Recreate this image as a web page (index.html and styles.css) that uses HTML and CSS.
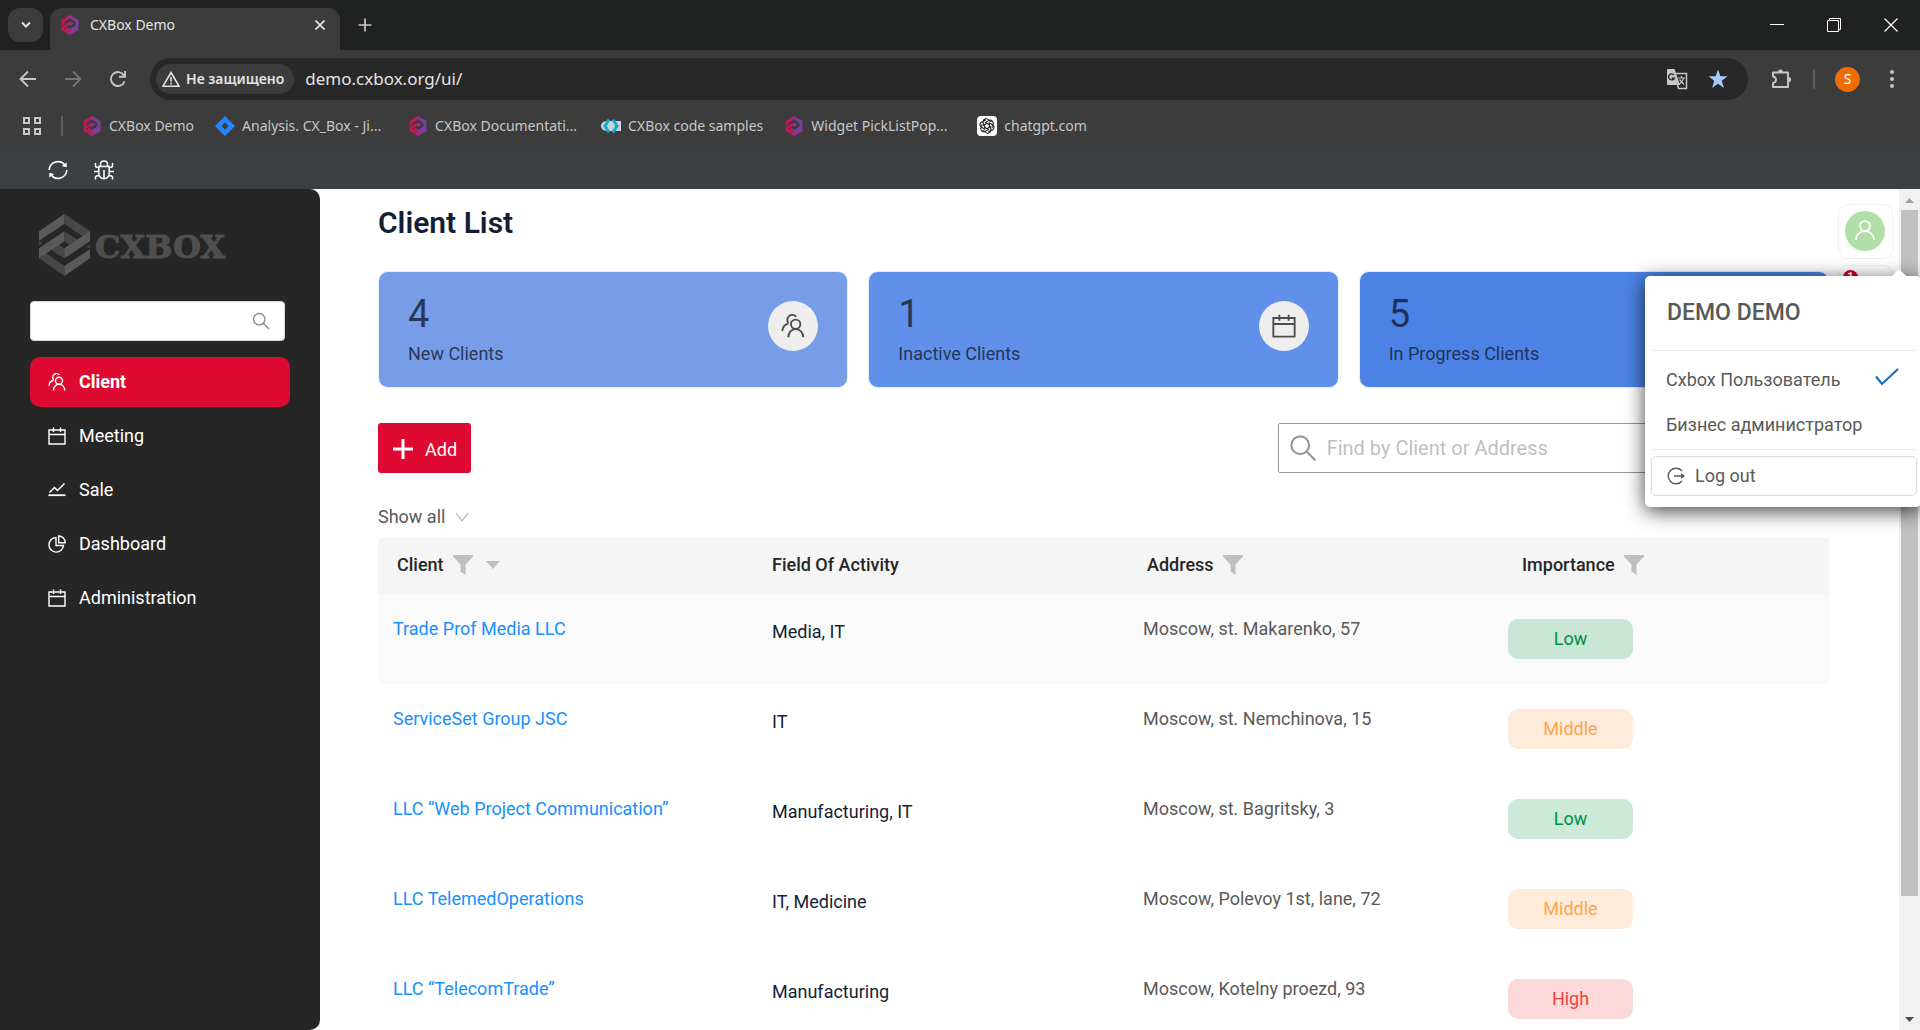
FILE: index.html
```html
<!DOCTYPE html>
<html lang="en">
<head>
<meta charset="utf-8">
<meta name="viewport" content="width=device-width, initial-scale=1">
<title>CXBox Demo</title>
<link rel="stylesheet" href="styles.css">
</head>
<body>
<svg class="defs" aria-hidden="true">
  <defs>
    <linearGradient id="brand" x1="0" x2="1" y1="0" y2="0">
      <stop offset="0.3" stop-color="#c2185b"/><stop offset="0.7" stop-color="#7b3fa0"/>
    </linearGradient>
    <symbol id="i-brand" viewBox="0 0 18 20">
      <path d="M9 0 17.500 5V12.500L9 17 5 14.500V11.500L9 14 14.500 10.500V7L9 3.500 3.500 7V9L.5 10.500V5Z" fill="url(#brand)"/>
      <path d="M.5 11.500 9 6.500 12.500 8.500 9 11 7.500 10 3.500 12.500V13.500L9 16.700 17.500 12V15L9 20 .5 15Z" fill="url(#brand)"/>
    </symbol>
    <symbol id="i-clients" viewBox="0 0 18 18">
      <g fill="none" stroke="currentColor" stroke-width="1.400">
        <circle cx="11" cy="7.700" r="3.500"/><path d="M5.500 17.500c0-3.800 2.300-6.200 5.500-6.200s5.700 2.400 5.700 6.200"/>
        <path d="M11.300 1.900A3.700 3.700 0 1 0 5.700 6.900M1 12.800C1.200 9.500 3 7.800 5.600 7.200"/>
      </g>
    </symbol>
    <symbol id="i-calendar" viewBox="0 0 18 18">
      <path d="M1 3H17V17H1ZM1 7.500H17M5.500.5V5M12.500.5V5" fill="none" stroke="currentColor" stroke-width="1.400"/>
    </symbol>
    <symbol id="i-chart" viewBox="0 0 18 18">
      <path d="M1.500 11.500 6.500 6.500 9.500 9.500 16.500 2.500" fill="none" stroke="currentColor" stroke-width="1.500"/><path d="M.5 14.200H17.500" stroke="currentColor" stroke-width="1.800"/>
    </symbol>
    <symbol id="i-pie" viewBox="0 0 18 18">
      <path d="M8 2.500A7.300 7.300 0 1 0 15.500 10.500H8ZM10.700 1V7.800H17.200A6.600 6.600 0 0 0 10.700 1Z" fill="none" stroke="currentColor" stroke-width="1.400"/>
    </symbol>
    <symbol id="i-search" viewBox="0 0 18 18">
      <g fill="none" stroke="currentColor" stroke-width="1.400"><circle cx="7.200" cy="7.200" r="5.700"/><path d="M11.300 11.300 17 17"/></g>
    </symbol>
    <symbol id="i-user" viewBox="0 0 20 20">
      <g fill="none" stroke="currentColor" stroke-width="1.700"><circle cx="10" cy="6" r="5"/><path d="M1 20C1 14.500 5 11.200 10 11.200S19 14.500 19 20"/></g>
    </symbol>
    <symbol id="i-filter" viewBox="0 0 20 20">
      <path d="M0 0H20V1.500L12.500 9.500V20L7.500 16.500V9.500L0 1.500Z" fill="currentColor"/>
    </symbol>
  </defs>
</svg>

<header class="browser">
  <div class="tabs">
    <button class="tab-menu" aria-label="Search tabs"><svg width="10" height="8" viewBox="0 0 10 8"><path d="M1 1.500 5 5.500 9 1.500" fill="none" stroke="#e3e3e3" stroke-width="2"/></svg></button>
    <div class="tab">
      <svg width="18" height="20"><use href="#i-brand"/></svg>
      <span class="tab-title">CXBox Demo</span>
      <button class="plain" aria-label="Close tab"><svg width="10" height="10" viewBox="0 0 10 10"><path d="M.5.5 9.500 9.500M9.500.5.5 9.500" stroke="#e3e3e3" stroke-width="1.700"/></svg></button>
    </div>
    <button class="plain new-tab" aria-label="New tab"><svg width="14" height="14" viewBox="0 0 14 14"><path d="M7 .5V13.500M.5 7H13.500" stroke="#c7c7c7" stroke-width="1.700"/></svg></button>
    <div class="window-buttons">
      <button class="plain" aria-label="Minimize"><svg width="14" height="14" viewBox="0 0 14 14"><path d="M0 6.500H14" stroke="#fff"/></svg></button>
      <button class="plain" aria-label="Restore"><svg width="14" height="14" viewBox="0 0 14 14"><path d="M.5 2.500H11.500V13.500H.5ZM2.500 2.500V.5H13.500V11.500H11.500" fill="none" stroke="#fff"/></svg></button>
      <button class="plain" aria-label="Close"><svg width="14" height="14" viewBox="0 0 14 14"><path d="M.5.5 13.500 13.500M13.500.5.5 13.500" stroke="#fff" stroke-width="1.200"/></svg></button>
    </div>
  </div>

  <div class="toolbar">
    <div class="nav-buttons">
      <button class="plain" aria-label="Back"><svg width="18" height="18" viewBox="0 0 18 18"><path d="M17 9H2M9 1.500 1.500 9 9 16.500" fill="none" stroke="#c7c7c7" stroke-width="1.900"/></svg></button>
      <button class="plain" aria-label="Forward"><svg width="18" height="18" viewBox="0 0 18 18"><path d="M1 9H16M9 1.500 16.500 9 9 16.500" fill="none" stroke="#757575" stroke-width="1.900"/></svg></button>
      <button class="plain" aria-label="Reload"><svg width="18" height="18" viewBox="0 0 18 18"><path d="M15.500 11.500A7 7 0 1 1 15 5.500M16 1V6.700H10" fill="none" stroke="#c7c7c7" stroke-width="1.900"/></svg></button>
    </div>
    <div class="omnibox">
      <button class="chip"><svg width="18" height="16" viewBox="0 0 18 16"><path d="M9 1.500 17 15.200H1ZM9 6V10.500M9 11.800V13.500" fill="none" stroke="#e3e3e3" stroke-width="1.600"/></svg>Не защищено</button>
      <input class="url" aria-label="Address" value="demo.cxbox.org/ui/">
      <button class="plain" aria-label="Translate"><svg width="22" height="22" viewBox="0 0 22 22">
        <path d="M2 1H8.500L14 17H2Q1 17 1 16V2Q1 1 2 1Z" fill="#c7c7c7"/>
        <path d="M10 5.500H20.500V20.500H12.500L11.500 17" fill="none" stroke="#c7c7c7" stroke-width="1.500"/>
        <path d="M8 7A3 3 0 1 0 8.300 10.300H5.800" fill="none" stroke="#282828" stroke-width="1.400"/>
        <path d="M12 10H19M15.500 8V10M17.500 10C17 13 15 15 13 16.500M13.500 11.500 18 16.500" fill="none" stroke="#c7c7c7" stroke-width="1.200"/></svg></button>
      <button class="plain" aria-label="Bookmarked"><svg width="20" height="20" viewBox="0 0 20 20"><path d="M10 .5 12.400 7.300H19.500L13.800 11.700 15.900 19 10 14.800 4.100 19 6.200 11.700.5 7.300H7.600Z" fill="#a8c7fa"/></svg></button>
    </div>
    <button class="plain ext" aria-label="Extensions"><svg width="22" height="22" viewBox="0 0 22 22"><path d="M2 4.500H17V19H2V15C6 14 6 9.500 2 8.500Z" fill="none" stroke="#c7c7c7" stroke-width="1.900" stroke-linejoin="round"/><path d="M7 4a2.500 2.500 0 0 1 5 0ZM17.500 9a2.600 2.600 0 0 1 0 5.200Z" fill="#c7c7c7"/></svg></button>
    <span class="divider"></span>
    <button class="profile">S</button>
    <button class="plain menu" aria-label="Menu"><svg width="4" height="18" viewBox="0 0 4 18"><g fill="#c7c7c7"><circle cx="2" cy="2" r="2"/><circle cx="2" cy="9" r="2"/><circle cx="2" cy="16" r="2"/></g></svg></button>
  </div>

  <nav class="bookmarks" aria-label="Bookmarks">
    <button class="plain" aria-label="Apps"><svg width="20" height="20" viewBox="0 0 20 20"><path d="M2 2H7V7H2ZM13 2H18V7H13ZM2 13H7V18H2ZM13 13H18V18H13Z" fill="none" stroke="#c7c7c7" stroke-width="2"/></svg></button>
    <span class="divider"></span>
    <a href="#"><svg width="20" height="20"><use href="#i-brand"/></svg>CXBox Demo</a>
    <a href="#"><svg width="20" height="20" viewBox="0 0 20 20"><path d="M10 0 20 10 10 20 0 10ZM10 6.500 6.500 10 10 13.500 13.500 10Z" fill="#2684ff" fill-rule="evenodd"/></svg><span class="trim">Analysis. CX_Box - Ji...</span></a>
    <a href="#"><svg width="20" height="20"><use href="#i-brand"/></svg><span class="trim">CXBox Documentati...</span></a>
    <a href="#"><svg width="20" height="20" viewBox="0 0 20 20"><path d="M5 5H20V15H5Q0 14 0 10T5 5Z" fill="#c9d3d6"/><path d="M8 3.500 4 10 8 16.500M12 3.500 16 10 12 16.500" fill="none" stroke="#14a9cf" stroke-width="3"/></svg>CXBox code samples</a>
    <a href="#"><svg width="20" height="20"><use href="#i-brand"/></svg><span class="trim">Widget PickListPop...</span></a>
    <a href="#"><svg width="20" height="20" viewBox="0 0 20 20"><rect width="20" height="20" rx="4" fill="#fff"/><g fill="none" stroke="#222" stroke-width="1.100"><g id="petal"><path d="M10 7.300 6.200 9.500V5.800A3 3 0 0 1 11.800 4.300L14.500 5.900"/></g><use href="#petal" transform="rotate(60 10 10)"/><use href="#petal" transform="rotate(120 10 10)"/><use href="#petal" transform="rotate(180 10 10)"/><use href="#petal" transform="rotate(240 10 10)"/><use href="#petal" transform="rotate(300 10 10)"/></g></svg>chatgpt.com</a>
  </nav>
</header>

<div class="dev-bar">
  <button class="plain" aria-label="Refresh"><svg width="20" height="20" viewBox="0 0 20 20"><g fill="none" stroke="#fff" stroke-width="1.600"><path d="M1.200 10A8.800 8.800 0 0 1 17 5.200M18.800 10A8.800 8.800 0 0 1 3 14.800"/></g><path d="M18.700 2.500V7.200L13.800 6ZM1.300 17.500V12.800L6.200 14Z" fill="#fff"/></svg></button>
  <button class="plain" aria-label="Debug"><svg width="20" height="20" viewBox="0 0 20 20"><path d="M4.800 6.500H15.200V13.500A5.200 5.200 0 0 1 4.800 13.500ZM6.500 6.500V4A3.500 3 0 0 1 13.500 4V6.500M10 10V18.500M1.500 3V6Q1.500 7.500 4.800 7.500M18.500 3V6Q18.500 7.500 15.200 7.500M0 11.500H4.800M15.200 11.500H20M1.500 19.500V17Q2 15.500 5 15.500M18.500 19.500V17Q18 15.500 15 15.500" fill="none" stroke="#fff" stroke-width="1.500"/></svg></button>
</div>

<div class="app">
  <aside class="sidebar">
    <a class="logo" href="#">
      <svg width="51" height="62" viewBox="0 0 153 186" aria-hidden="true">
        <path d="M76 0 153 52V82L76 30ZM76 52 120 80 98 96 76 82ZM153 92V103L142 98ZM76 186 0 133V103L76 156ZM76 133 32 105 54 89 76 103ZM0 93V82L12 88Z" fill="#474747"/>
        <path d="M76 0V30L0 80V52ZM0 103 76 52V82L0 133ZM76 186V156L153 106V133ZM153 52V82L76 133V103Z" fill="#5a5a5a"/>
      </svg>
      <span class="logo-name">CXBOX</span>
    </a>
    <div class="side-search">
      <input type="search" aria-label="Search screens">
      <svg width="18" height="18"><use href="#i-search"/></svg>
    </div>
    <nav class="side-menu" aria-label="Screens">
      <a class="active" href="#"><svg width="18" height="18"><use href="#i-clients"/></svg>Client</a>
      <a href="#"><svg width="18" height="18"><use href="#i-calendar"/></svg>Meeting</a>
      <a href="#"><svg width="18" height="18"><use href="#i-chart"/></svg>Sale</a>
      <a href="#"><svg width="18" height="18"><use href="#i-pie"/></svg>Dashboard</a>
      <a href="#"><svg width="18" height="18"><use href="#i-calendar"/></svg>Administration</a>
    </nav>
  </aside>

  <main class="content">
    <h1>Client List</h1>

    <section class="cards" aria-label="Statistics">
      <article class="card new">
        <div><p class="count">4</p><p class="caption">New Clients</p></div>
        <span class="card-icon"><svg width="24" height="24"><use href="#i-clients"/></svg></span>
      </article>
      <article class="card inactive">
        <div><p class="count">1</p><p class="caption">Inactive Clients</p></div>
        <span class="card-icon"><svg width="24" height="24"><use href="#i-calendar"/></svg></span>
      </article>
      <article class="card progress">
        <div><p class="count">5</p><p class="caption">In Progress Clients</p></div>
        <span class="card-icon"><svg width="24" height="24"><use href="#i-chart"/></svg></span>
      </article>
    </section>

    <div class="actions">
      <button class="add"><svg width="20" height="20" viewBox="0 0 20 20"><path d="M10 0V20M0 10H20" stroke="#fff" stroke-width="3"/></svg><span class="add-text">Add</span></button>
      <label class="find">
        <svg width="28" height="28"><use href="#i-search"/></svg>
        <input type="text" placeholder="Find by Client or Address" aria-label="Find by Client or Address">
      </label>
    </div>

    <label class="filter-group">
      <select aria-label="Filter group"><option>Show all</option></select>
      <svg width="14" height="10" viewBox="0 0 14 10"><path d="M1 1 7 9 13 1" fill="none" stroke="#bfbfbf" stroke-width="1.300"/></svg>
    </label>

    <table>
      <thead>
        <tr>
          <th><span class="head">Client <svg width="20" height="20"><use href="#i-filter"/></svg><svg class="sort" width="14" height="8" viewBox="0 0 14 8"><path d="M0 0H14L7 8Z" fill="currentColor"/></svg></span></th>
          <th>Field Of Activity</th>
          <th><span class="head">Address <svg width="20" height="20"><use href="#i-filter"/></svg></span></th>
          <th><span class="head">Importance <svg width="20" height="20"><use href="#i-filter"/></svg></span></th>
        </tr>
      </thead>
      <tbody>
        <tr class="hover"><td><a href="#">Trade Prof Media LLC</a></td><td class="field">Media, IT</td><td>Moscow, st. Makarenko, 57</td><td class="level"><span class="badge low">Low</span></td></tr>
        <tr><td><a href="#">ServiceSet Group JSC</a></td><td class="field">IT</td><td>Moscow, st. Nemchinova, 15</td><td class="level"><span class="badge middle">Middle</span></td></tr>
        <tr><td><a href="#">LLC “Web Project Communication”</a></td><td class="field">Manufacturing, IT</td><td>Moscow, st. Bagritsky, 3</td><td class="level"><span class="badge low">Low</span></td></tr>
        <tr><td><a href="#">LLC TelemedOperations</a></td><td class="field">IT, Medicine</td><td>Moscow, Polevoy 1st, lane, 72</td><td class="level"><span class="badge middle">Middle</span></td></tr>
        <tr><td><a href="#">LLC “TelecomTrade”</a></td><td class="field">Manufacturing</td><td>Moscow, Kotelny proezd, 93</td><td class="level"><span class="badge high">High</span></td></tr>
      </tbody>
    </table>
  </main>

  <div class="side-tools">
    <button class="tool" aria-label="User menu"><span class="avatar"><svg width="20" height="20"><use href="#i-user"/></svg></span></button>
    <button class="tool" aria-label="Notifications"><span class="alert">1</span></button>
  </div>

  <div class="scrollbar" aria-hidden="true">
    <svg width="21" height="21" viewBox="0 0 21 21"><path d="M6 14H15L10.500 9Z" fill="#a3a3a3"/></svg>
    <span class="thumb"></span>
    <span class="track"></span>
    <svg width="21" height="21" viewBox="0 0 21 21"><path d="M6 8H15L10.500 13Z" fill="#505050"/></svg>
  </div>

  <section class="user-menu" aria-label="User">
    <h2>DEMO DEMO</h2>
    <ul>
      <li><button class="role">Cxbox Пользователь<svg class="check" width="24" height="18" viewBox="0 0 24 18"><path d="M1 8.500 7 16 23 1" fill="none" stroke="#1c6fc0" stroke-width="2.200"/></svg></button></li>
      <li><button class="role">Бизнес администратор</button></li>
    </ul>
    <button class="logout"><svg width="18" height="18" viewBox="0 0 18 18"><path d="M15 4A7.800 7.800 0 1 0 15 14M7 9H16" fill="none" stroke="#595959" stroke-width="1.400"/><path d="M14 6 18 9 14 12Z" fill="#595959"/></svg>Log out</button>
  </section>
</div>
</body>
</html>
```

FILE: styles.css
```css
* { box-sizing: border-box; }

body {
  margin: 0;
  height: 100vh;
  display: flex;
  flex-direction: column;
  overflow: hidden;
  background: #fff;
  font-family: Roboto, "Liberation Sans", sans-serif;
  font-size: 18px;
  line-height: 28px;
  color: #141f35;
}

h1, h2, p, ul { margin: 0; padding: 0; }
ul { list-style: none; }
a { color: inherit; text-decoration: none; }
button, input, select { font: inherit; color: inherit; }
svg { display: block; flex: none; }
.defs { position: absolute; width: 0; height: 0; }

.plain {
  display: flex;
  align-items: center;
  padding: 0;
  border: 0;
  background: none;
}

/* Browser frame */
.browser {
  flex: none;
  background: #3c3c3c;
  color: #e3e3e3;
  font-family: "Noto Sans", "Open Sans", sans-serif;
  font-size: 14px;
  line-height: 20px;
}

.tabs {
  display: flex;
  align-items: center;
  height: 50px;
  padding-left: 8px;
  background: #202221;
}

.tab-menu {
  display: flex;
  align-items: center;
  justify-content: center;
  width: 35px;
  height: 34px;
  border: 0;
  border-radius: 12px;
  background: #3c3c3c;
}

.tab {
  display: flex;
  align-items: center;
  align-self: flex-end;
  gap: 11px;
  width: 290px;
  height: 42px;
  margin-left: 7px;
  padding: 0 15px 8px 11px;
  border-radius: 12px 12px 0 0;
  background: #3c3c3c;
}

.tab-title { flex: 1; }
.new-tab { margin-left: 18px; }

.window-buttons {
  display: flex;
  gap: 43px;
  margin-left: auto;
  padding-right: 22px;
}

.toolbar {
  display: flex;
  align-items: center;
  height: 50px;
  padding: 8px 26px 0 19px;
}

.nav-buttons {
  display: flex;
  gap: 27px;
  width: 131px;
}

.omnibox {
  flex: 1;
  display: flex;
  align-items: center;
  gap: 20px;
  height: 42px;
  padding: 0 20px 0 6px;
  border-radius: 21px;
  background: #282828;
}

.chip {
  display: flex;
  align-items: center;
  gap: 6px;
  height: 30px;
  padding: 0 10px 0 6px;
  border: 0;
  border-radius: 15px;
  background: #3c3c3c;
  font-weight: 600;
  white-space: nowrap;
}

.url {
  flex: 1;
  min-width: 0;
  margin-left: -9px;
  padding: 0;
  border: 0;
  outline: 0;
  background: none;
  font-size: 17px;
}

.ext { margin-left: 23px; }

.divider {
  width: 2px;
  height: 20px;
  border-radius: 1px;
  background: #5f6062;
}

.toolbar .divider { margin: 0 20px; }

.profile {
  width: 25px;
  height: 25px;
  padding: 0;
  border: 0;
  border-radius: 50%;
  background: #ef6c00;
  color: #fff;
}

.menu { margin-left: 30px; }

.bookmarks {
  display: flex;
  align-items: center;
  gap: 21px;
  height: 51px;
  padding-left: 22px;
  color: #c7c7c7;
}

.bookmarks .divider { margin: 0 -2px; }

.bookmarks a {
  display: flex;
  align-items: center;
  gap: 7px;
  white-space: nowrap;
}

.trim { width: 145px; }

.dev-bar {
  flex: none;
  display: flex;
  align-items: center;
  gap: 26px;
  height: 38px;
  padding-left: 48px;
  background: #3c4043;
}

/* Application */
.app {
  position: relative;
  flex: 1;
  min-height: 0;
  display: flex;
  overflow: hidden;
}

.sidebar {
  flex: none;
  width: 320px;
  padding: 25px 30px;
  border-radius: 0 10px 10px 0;
  background: #262626;
  color: #fff;
}

.logo {
  display: flex;
  align-items: center;
  gap: 5px;
  margin-left: 9px;
  color: #4f4f4f;
  font-family: "DejaVu Serif", serif;
  font-size: 32px;
  font-weight: 700;
}

.logo-name {
  padding-top: 4px;
  -webkit-text-stroke: 1px #4f4f4f;
}

.side-search {
  display: flex;
  align-items: center;
  width: 255px;
  height: 40px;
  margin-top: 25px;
  padding-right: 14px;
  border: 1px solid #d9d9d9;
  border-radius: 4px;
  background: #fff;
  color: #8c8c8c;
}

.side-search input {
  flex: 1;
  min-width: 0;
  border: 0;
  outline: 0;
  background: none;
}

.side-menu {
  display: grid;
  gap: 4px;
  margin-top: 16px;
}

.side-menu a {
  display: flex;
  align-items: center;
  gap: 13px;
  height: 50px;
  padding-left: 18px;
  border-radius: 10px;
}

.side-menu .active {
  background: #de0a32;
  font-weight: 700;
}

.content {
  flex: 1;
  min-width: 0;
  padding: 13px 70px 0 58px;
}

h1 {
  margin-bottom: 27px;
  font-size: 30px;
  font-weight: 600;
  line-height: 42px;
}

.cards {
  display: grid;
  grid-template-columns: repeat(3, 1fr);
  gap: 20px;
}

.card {
  display: flex;
  align-items: center;
  justify-content: space-between;
  height: 117px;
  padding: 0 29px;
  border: 1px solid #e8eefb;
  border-radius: 10px;
}

.card.new { background: #779de8; }
.card.inactive { background: #6090ea; }
.card.progress { background: #4c82e6; }
.card p { opacity: 0.8; }

.count {
  margin-bottom: 4px;
  font-size: 38px;
  line-height: 44px;
}

.card-icon {
  display: grid;
  place-items: center;
  width: 50px;
  height: 50px;
  margin-top: -8px;
  border-radius: 50%;
  background: #eee;
  color: #4d4d4d;
}

.actions {
  display: flex;
  justify-content: space-between;
  margin-top: 35px;
}

.add {
  display: flex;
  align-items: center;
  gap: 12px;
  height: 50px;
  padding: 2px 14px 0 15px;
  border: 0;
  border-radius: 3px;
  background: #de0a32;
  color: #fff;
}

.add-text { padding-top: 2px; }

.find {
  display: flex;
  align-items: center;
  gap: 10px;
  width: 38%;
  height: 50px;
  padding: 0 10px;
  border: 1px solid #999;
  border-radius: 2px;
  color: #999;
}

.find input {
  flex: 1;
  min-width: 0;
  padding: 0;
  border: 0;
  outline: 0;
  font-size: 20px;
}

.find input::placeholder { color: #bfbfbf; }

.filter-group {
  display: flex;
  align-items: center;
  gap: 9px;
  height: 42px;
  margin-top: 23px;
  color: #595959;
}

.filter-group select {
  padding: 0;
  border: 0;
  outline: 0;
  appearance: none;
  background: none;
}

table {
  width: 100%;
  table-layout: fixed;
  border-collapse: collapse;
  color: #595959;
}

th {
  width: 375px;
  height: 56px;
  padding: 0 19px 2px;
  background: #f5f5f5;
  color: #262626;
  font-weight: 500;
  text-align: left;
}

th:last-child { width: auto; }
th:first-child { border-radius: 5px 0 0; }
th svg { color: #bfbfbf; }

.head {
  display: flex;
  align-items: center;
  gap: 9px;
}

.head .sort { margin-left: 4px; }

td {
  height: 90px;
  padding: 21px 15px 0;
  vertical-align: top;
}

td a { color: #1890ff; }

.field {
  padding: 24px 19px 0;
  color: #141f35;
}

.level { padding: 25px 5px 0; }
.hover { background: #fafafa; }

.badge {
  display: block;
  width: 125px;
  border-radius: 10px;
  line-height: 40px;
  text-align: center;
}

.low { background: rgba(0, 143, 66, 0.2); color: #008f42; }
.middle { background: #ffebda; color: #ffa44b; }
.high { background: #fad9d8; color: #f33f3f; }

.side-tools {
  position: absolute;
  top: 15px;
  right: 27px;
  display: grid;
  gap: 6px;
}

.tool {
  position: relative;
  display: grid;
  place-items: start;
  width: 55px;
  height: 55px;
  padding: 6px;
  border: 1px solid #f0f0f0;
  border-radius: 10px;
  background: #fff;
}

.avatar {
  display: grid;
  place-items: center;
  width: 40px;
  height: 40px;
  padding-bottom: 3px;
  border-radius: 50%;
  background: #b2dfa9;
  color: #fff;
}

.alert {
  position: absolute;
  top: 4px;
  left: 4px;
  width: 15px;
  height: 15px;
  border-radius: 50%;
  background: #d0021b;
  color: #fff;
  font-size: 12px;
  font-weight: 700;
  line-height: 15px;
}

.scrollbar {
  flex: none;
  display: flex;
  flex-direction: column;
  width: 21px;
  background: #f1f1f1;
}

.thumb {
  flex: 686;
  margin: 0 2px;
  background: #c1c1c1;
}

.track { flex: 113; }

.user-menu {
  position: absolute;
  top: 87px;
  right: -1px;
  width: 276px;
  padding: 0 4px 11px 6px;
  border-radius: 5px;
  background: #fff;
  box-shadow: 0 4px 20px rgba(0, 0, 0, 0.75);
  color: #595959;
}

.user-menu::before {
  content: "";
  position: absolute;
  top: -5px;
  right: 17px;
  width: 10px;
  height: 10px;
  background: #fff;
  transform: rotate(45deg);
}

.user-menu h2 {
  padding: 0 16px;
  border-bottom: 1px solid #e8e8e8;
  font-size: 23px;
  font-weight: 500;
  line-height: 74px;
}

.user-menu ul {
  padding: 6px 0 2px;
  border-bottom: 1px solid #e8e8e8;
}

.role {
  display: flex;
  align-items: center;
  justify-content: space-between;
  width: 100%;
  height: 45px;
  padding: 0 18px 0 15px;
  border: 0;
  background: none;
}

.check { margin-bottom: 6px; }

.logout {
  display: flex;
  align-items: center;
  gap: 10px;
  width: 100%;
  height: 40px;
  margin-top: 6px;
  padding: 0 15px;
  border: 1px solid #d9d9d9;
  border-radius: 5px;
  background: #fff;
}
```
